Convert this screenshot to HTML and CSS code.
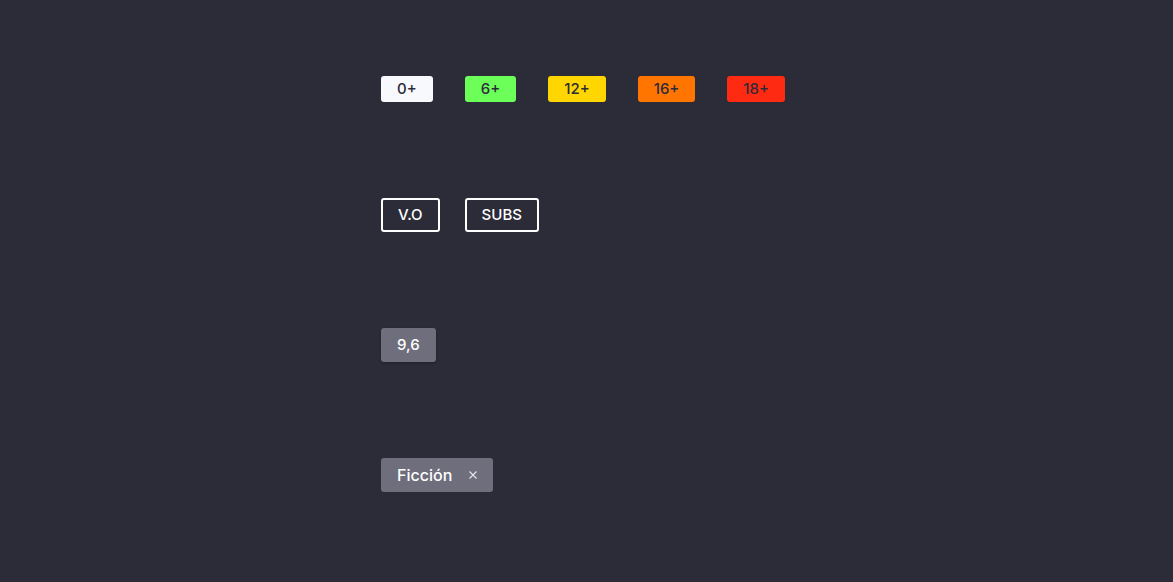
FILE: index.html
```html
<!DOCTYPE html>
<html lang="es">
<head>
<meta charset="utf-8">
<link rel="stylesheet" href="styles.css">
</head>
<body>
<main class="stack">
  <div class="row ratings">
    <span class="rating r0">0+</span>
    <span class="rating r6">6+</span>
    <span class="rating r12">12+</span>
    <span class="rating r16">16+</span>
    <span class="rating r18">18+</span>
  </div>
  <div class="row langs">
    <span class="outline">V.O</span>
    <span class="outline">SUBS</span>
  </div>
  <div class="row">
    <span class="score">9,6</span>
  </div>
  <div class="row">
    <span class="chip">Ficción<svg class="chip-x" width="8" height="8" viewBox="0 0 8 8"><path d="M0.5 0.5 L7.5 7.5 M7.5 0.5 L0.5 7.5" stroke="currentColor" stroke-width="1.1" fill="none"/></svg></span>
  </div>
</main>
</body>
</html>
```
FILE: styles.css
```css
html, body {
  margin: 0;
  padding: 0;
  background: #2c2b38;
  font-family: Inter, "Noto Sans", sans-serif;
}
.stack {
  display: flex;
  flex-direction: column;
  align-items: flex-start;
  gap: 96px;
  padding: 76px 0 0 381px;
}
.row {
  display: flex;
  align-items: center;
}
.ratings { gap: 32px; }
.langs { gap: 25px; }
.rating {
  display: inline-block;
  padding: 4px 16px;
  line-height: 18px;
  font-size: 15px;
  font-weight: 500;
  color: #2c2b38;
  border-radius: 3px;
}
.r0 { background: #f8f9fd; }
.r6 { background: #6cff5a; }
.r12 { background: #ffd600; }
.r16 { background: #ff7500; }
.r18 { background: #ff2a12; }
.outline {
  display: inline-block;
  padding: 6px 15px;
  line-height: 18px;
  font-size: 15px;
  font-weight: 500;
  color: #ffffff;
  border: 2px solid #ffffff;
  border-radius: 3px;
}
.score {
  display: inline-block;
  padding: 8px 16px;
  line-height: 18px;
  font-size: 15px;
  font-weight: 500;
  color: #ffffff;
  background: #6e6e7c;
  border-radius: 3px;
  box-shadow: 0 1px 3px rgba(0,0,0,0.3);
}
.chip {
  display: inline-flex;
  align-items: center;
  gap: 17px;
  padding: 8px 16px;
  line-height: 18px;
  font-size: 16px;
  font-weight: 500;
  color: #ffffff;
  background: #6e6e7c;
  border-radius: 3px;
}
.chip-x { color: #e8e8ee; }
```
